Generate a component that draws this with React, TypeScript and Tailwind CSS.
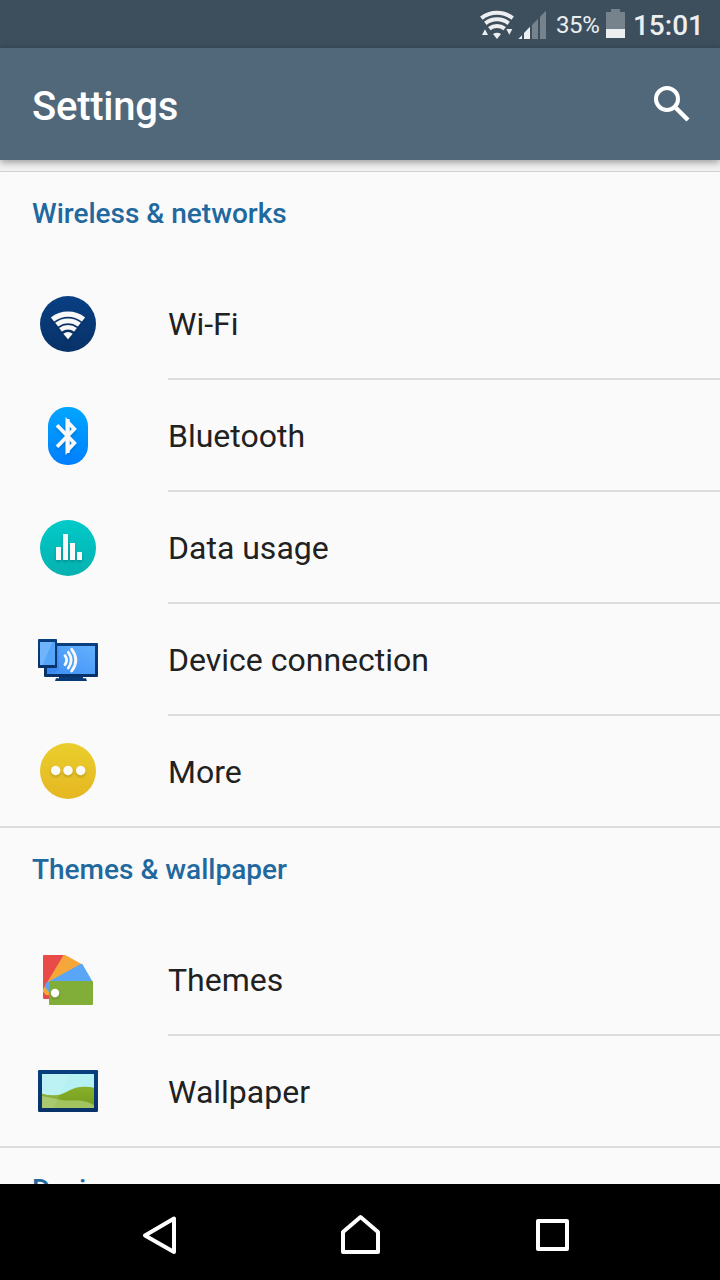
import type { ReactNode } from "react";

const IconBox = ({ children }: { children: ReactNode }) => (
  <svg viewBox="0 0 240 240" className="ml-7 h-20 w-20 shrink-0" aria-hidden="true">
    {children}
  </svg>
);

const WifiIcon = () => (
  <IconBox>
    <defs>
      <linearGradient id="wifi-bg" x1="0" y1="0" x2="0" y2="1">
        <stop offset="0" stopColor="#083f83" />
        <stop offset="1" stopColor="#083268" />
      </linearGradient>
      <filter id="soft" x="-20%" y="-20%" width="140%" height="150%">
        <feDropShadow dx="0" dy="5" stdDeviation="4" floodColor="#000" floodOpacity="0.22" />
      </filter>
    </defs>
    <circle cx="120" cy="120" r="84" fill="url(#wifi-bg)" />
    <g fill="none" stroke="#f8f8f8" filter="url(#soft)">
      <path d="M73.500 106.500A75.500 75.500 0 0 1 166.500 106.500" strokeWidth="16" />
      <path d="M86 122A56 56 0 0 1 154 122" strokeWidth="14.500" />
      <path d="M97.500 137.500A37 37 0 0 1 142.500 137.500" strokeWidth="13.500" />
      <path d="M120 166L106 149.500Q120 139 134 149.500Z" fill="#f8f8f8" stroke="none" />
    </g>
  </IconBox>
);

const BluetoothIcon = () => (
  <IconBox>
    <defs>
      <linearGradient id="bt-bg" x1="0" y1="0" x2="0" y2="1">
        <stop offset="0" stopColor="#00a6ff" />
        <stop offset="1" stopColor="#007fff" />
      </linearGradient>
    </defs>
    <rect x="60" y="33" width="120" height="174" rx="58" fill="url(#bt-bg)" />
    <g fill="none" stroke="#f8f8f8" filter="url(#soft)">
      <path d="M87 88L139 141L118 163V77L139 99L87 152" strokeWidth="11" />
      <path d="M119.500 69V171" strokeWidth="11" />
    </g>
  </IconBox>
);

const DataUsageIcon = () => (
  <IconBox>
    <defs>
      <linearGradient id="data-bg" x1="0" y1="0" x2="0" y2="1">
        <stop offset="0" stopColor="#02cac8" />
        <stop offset="1" stopColor="#05b1b0" />
      </linearGradient>
    </defs>
    <circle cx="120" cy="120" r="84" fill="url(#data-bg)" />
    <g fill="#f8f8f8" filter="url(#soft)">
      <rect x="84" y="117" width="15" height="39" />
      <rect x="105" y="78" width="15" height="78" />
      <rect x="126" y="105" width="15" height="51" />
      <rect x="147" y="132" width="15" height="24" />
    </g>
  </IconBox>
);

const DeviceIcon = () => (
  <IconBox>
    <defs>
      <linearGradient id="tv-bg" x1="1" y1="0" x2="0" y2="1">
        <stop offset="0" stopColor="#63b1fd" />
        <stop offset="1" stopColor="#3d8df5" />
      </linearGradient>
      <linearGradient id="frame" x1="0" y1="0" x2="0" y2="1">
        <stop offset="0" stopColor="#083f80" />
        <stop offset="1" stopColor="#083268" />
      </linearGradient>
    </defs>
    <rect x="48" y="69" width="162" height="102" rx="3" fill="url(#frame)" />
    <rect x="57" y="78" width="144" height="84" fill="url(#tv-bg)" />
    <path d="M57 144H87V78H92V148L80 158H57Z" fill="#2f7be6" opacity="0.4" />
    <path d="M93 171H165V175H174L177 183H81L84 175H93Z" fill="#083a77" />
    <rect x="30" y="57" width="57" height="87" rx="2" fill="url(#frame)" />
    <rect x="36" y="66" width="45" height="69" fill="#55a5fa" />
    <path d="M36 66H73L44 135H36Z" fill="#70b5fb" />
    <g fill="none" stroke="#f8f8f8" strokeWidth="8.500" strokeLinecap="round">
      <path d="M111 107Q121 120 111 134" />
      <path d="M121 97Q138 120 121 144" />
      <path d="M131 88Q156 120 131 153" />
    </g>
  </IconBox>
);

const MoreIcon = () => (
  <IconBox>
    <defs>
      <linearGradient id="more-bg" x1="0" y1="0" x2="0" y2="1">
        <stop offset="0" stopColor="#eace2d" />
        <stop offset="1" stopColor="#e5b722" />
      </linearGradient>
    </defs>
    <circle cx="120" cy="117" r="84" fill="url(#more-bg)" />
    <g fill="#fafafa" filter="url(#soft)">
      <circle cx="83" cy="115.500" r="14" />
      <circle cx="120" cy="115.500" r="14" />
      <circle cx="158" cy="115.500" r="14" />
    </g>
  </IconBox>
);

const ThemesIcon = () => (
  <IconBox>
    <path d="M48 45H108L63 177H48Q45 177 45 174V48Q45 45 48 45Z" fill="#e94b49" />
    <path d="M107 45H112L162 73L72 165H54L45 155V148Z" fill="#f6a73a" />
    <path d="M53 130L158 72H163L193 124L66 160L50 140Z" fill="#5aa6f6" />
    <rect x="63" y="123" width="132" height="72" rx="3" fill="#81ae38" />
    <circle cx="81" cy="159" r="12.500" fill="#fff" filter="url(#soft)" />
  </IconBox>
);

const WallpaperIcon = () => (
  <IconBox>
    <defs>
      <linearGradient id="hill" x1="0" y1="0" x2="0" y2="1">
        <stop offset="0" stopColor="#87af2b" />
        <stop offset="1" stopColor="#749d1d" />
      </linearGradient>
    </defs>
    <rect x="30" y="54" width="180" height="126" rx="4" fill="url(#frame)" />
    <rect x="42" y="66" width="156" height="102" fill="#b5f1f3" />
    <path d="M42 125Q65 131 90 129C118 124 130 103 172 104Q187 104 198 107V168H42Z" fill="url(#hill)" />
    <path d="M42 132Q68 137 97 143C130 150 166 137 198 160V168H42Z" fill="#a2c460" />
    <path d="M42 66H124L77 168H42Z" fill="#fff" opacity="0.1" />
  </IconBox>
);

const sections = [
  {
    title: "Wireless & networks",
    items: [
      { label: "Wi-Fi", icon: <WifiIcon /> },
      { label: "Bluetooth", icon: <BluetoothIcon /> },
      { label: "Data usage", icon: <DataUsageIcon /> },
      { label: "Device connection", icon: <DeviceIcon /> },
      { label: "More", icon: <MoreIcon /> },
    ],
  },
  {
    title: "Themes & wallpaper",
    items: [
      { label: "Themes", icon: <ThemesIcon /> },
      { label: "Wallpaper", icon: <WallpaperIcon /> },
    ],
  },
  { title: "Device", items: [] },
];

const StatusBar = () => (
  <div className="flex h-12 shrink-0 items-center justify-end bg-[#3d4f5d] pr-4 text-[#eceef0]">
    <svg viewBox="30 0 210 144" className="h-12 w-[70px]" aria-hidden="true">
      <g fill="none" stroke="#eceef0" strokeWidth="12">
        <path d="M34 54.500A77 77 0 0 1 128 54.500" />
        <path d="M46 70A57 57 0 0 1 116 70" />
        <path d="M58 86A37 37 0 0 1 104 86" />
      </g>
      <g fill="#eceef0">
        <path d="M81 117L69 102Q81 94 93 102Z" />
        <path d="M36 105L45 88L54 105Z" />
        <path d="M109 87H127L118 104Z" />
        <path d="M145 117L156 106V117Z" />
        <path d="M162 117V99L180 80V117Z" />
      </g>
      <g fill="#76838d">
        <path d="M186 117V75L204 56V117Z" />
        <path d="M210 117V50L228 32V117Z" />
      </g>
    </svg>
    <span className="ml-[6px] w-[50px] pt-[2px] text-[24px] leading-7 tracking-[-0.4px]">35%</span>
    <svg viewBox="408 0 57 144" className="h-12 w-[19px]" aria-hidden="true">
      <path d="M408 36H423V27H450V36H465V87H408Z" fill="#76838d" />
      <path d="M408 87H465V114H408Z" fill="#eceef0" />
    </svg>
    <span className="ml-2 pt-1 text-[28px] leading-8 font-medium">15:01</span>
  </div>
);

const NavBar = () => (
  <nav className="flex h-24 shrink-0 items-center bg-black pl-[136px]">
    <svg viewBox="0 0 48 48" className="h-12 w-12" fill="none" stroke="#fff" strokeWidth="4" strokeLinejoin="round" aria-hidden="true">
      <path d="M38 10.500V44L9 27.500Z" />
    </svg>
    <svg viewBox="0 0 48 48" className="ml-[152px] h-12 w-12" fill="none" stroke="#fff" strokeWidth="4" strokeLinejoin="round" aria-hidden="true">
      <path d="M7 44V24L24.500 9L42 24V44Z" />
    </svg>
    <svg viewBox="0 0 48 48" className="ml-36 h-12 w-12" fill="none" stroke="#fff" strokeWidth="4" strokeLinejoin="round" aria-hidden="true">
      <path d="M10 13H39V41H10Z" />
    </svg>
  </nav>
);

export default function App() {
  return (
    <div className="flex h-[1280px] w-[720px] flex-col overflow-hidden bg-[#fafafa] font-['Roboto',sans-serif]">
      <StatusBar />
      <header className="z-10 flex h-28 shrink-0 items-center justify-between bg-[#51687a] pr-6 pl-8 shadow-[0_2px_8px_rgba(0,0,0,0.4)]">
        <h1 className="pt-[6px] text-[40px] leading-12 font-medium tracking-[-0.25px] text-white">Settings</h1>
        <svg viewBox="0 0 48 48" className="h-12 w-12" fill="none" stroke="#fff" aria-hidden="true">
          <circle cx="19" cy="19" r="11" strokeWidth="4" />
          <path d="M28 28L40 40" strokeWidth="4.500" />
        </svg>
      </header>
      <main className="flex min-h-0 flex-1 flex-col overflow-hidden">
        <div className="h-3 shrink-0 border-b border-[#d2d2d2] bg-[#f3f3f3]" />
        {sections.map((section) => (
          <section key={section.title} className="shrink-0">
            <h2 className="h-24 pt-[26px] pl-8 text-[28px] leading-8 font-medium text-[#21689f]">
              {section.title}
            </h2>
            <ul>
              {section.items.map((item, index) => (
                <li
                  key={item.label}
                  className={
                    index === section.items.length - 1
                      ? "flex h-28 border-b-2 border-[#dcdcdc] pt-4"
                      : "flex h-28 pt-4"
                  }
                >
                  {item.icon}
                  <div
                    className={
                      index === section.items.length - 1
                        ? "ml-[60px] flex-1"
                        : "ml-[60px] flex-1 border-b-2 border-[#dcdcdc]"
                    }
                  >
                    <span className="block pt-5 text-[32px] leading-10 text-[#212121]">{item.label}</span>
                  </div>
                </li>
              ))}
            </ul>
          </section>
        ))}
      </main>
      <NavBar />
    </div>
  );
}
